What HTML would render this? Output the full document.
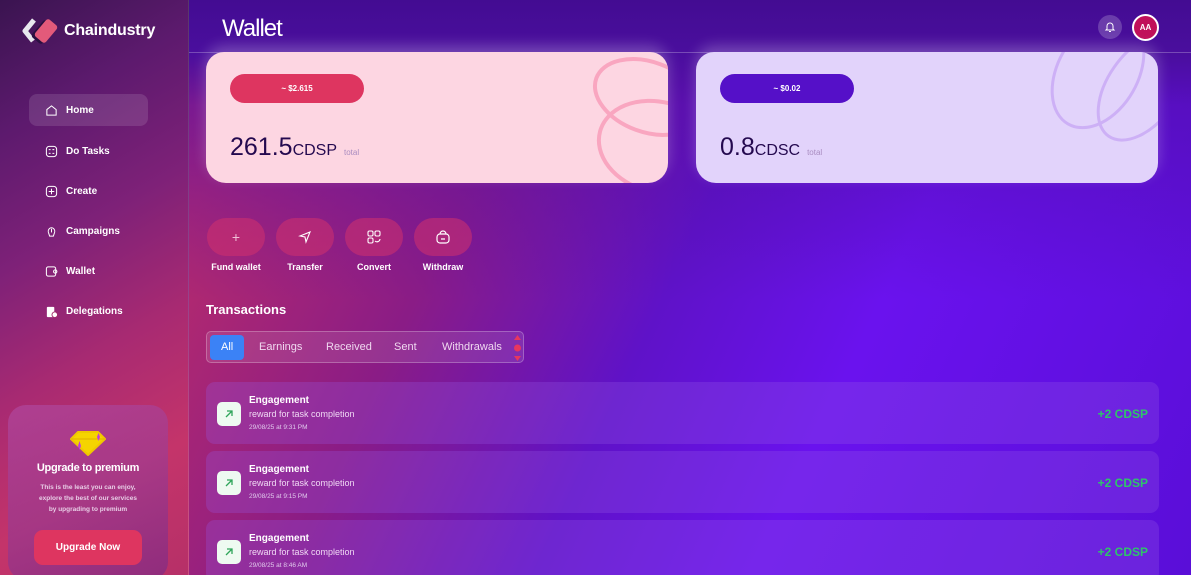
<!DOCTYPE html>
<html><head><meta charset="utf-8"><style>
*{box-sizing:border-box;margin:0;padding:0}
html,body{width:1191px;height:575px;overflow:hidden}
body{font-family:"Liberation Sans",sans-serif;position:relative;
background:linear-gradient(115deg,#c82f62 0%,#b42a6e 20%,#8a1c86 38%,#5f12c8 55%,#6a12ee 70%,#5a0ed8 100%)}
.topfade{position:absolute;left:189px;top:0;right:0;height:300px;background:linear-gradient(180deg,#430c92 0%,#4a0e9e 18%,rgba(80,14,170,0.6) 35%,rgba(80,14,170,0) 100%)}
.side{position:absolute;left:0;top:0;width:189px;height:575px;background:linear-gradient(150deg,#3a1450 0%,#5d1a6e 20%,#7e2178 40%,#a82a72 60%,#c4346a 80%,#b63068 100%);border-right:1px solid rgba(255,255,255,0.15)}
.logo{position:absolute;left:22px;top:17px;display:flex;align-items:center}
.logo span{color:#fff;font-weight:bold;font-size:16px;margin-left:4px;letter-spacing:-0.2px}
.nav{position:absolute;left:29px;width:119px;height:32px;display:flex;align-items:center;padding-left:16px;color:#fff;font-size:10px;font-weight:bold;border-radius:8px}
.nav svg{margin-right:8px}
.nav.act{background:rgba(255,255,255,0.12)}
.up{position:absolute;left:8px;top:405px;width:160px;height:175px;border-radius:18px;background:linear-gradient(160deg,rgba(180,80,170,0.55),rgba(110,40,140,0.55));text-align:center;color:#fff}
.up h4{font-size:11px;margin-top:57px;letter-spacing:-0.3px}
.up p{font-size:6.5px;line-height:11px;color:#e8cde6;font-weight:bold;margin-top:8px}
.up .btn{position:absolute;left:26px;top:125px;width:108px;height:35px;border-radius:9px;background:#de3560;font-size:10px;font-weight:bold;display:flex;align-items:center;justify-content:center}
.hline{position:absolute;left:189px;right:0;top:52px;height:1px;background:rgba(255,255,255,0.25)}
h1{position:absolute;left:222px;top:15px;color:#fff;font-size:24px;font-weight:normal;letter-spacing:-1px}
.card{position:absolute;top:52px;width:462px;height:131px;border-radius:18px 18px 20px 20px;overflow:hidden;box-shadow:0 -6px 14px rgba(255,255,255,0.25)}
.pill{position:absolute;left:24px;top:22px;width:134px;height:29px;border-radius:15px;color:#fff;font-size:8px;font-weight:bold;display:flex;align-items:center;justify-content:center}
.amt{position:absolute;left:24px;top:81px;color:#24094f;font-size:25px}
.amt b{font-weight:normal;font-size:16px}
.amt i{font-style:normal;font-size:8px;color:#a98cc0}
.ab{position:absolute;top:218px;width:58px;height:38px;border-radius:19px;background:rgba(210,50,110,0.55);display:flex;align-items:center;justify-content:center}
.al{position:absolute;top:262px;color:#fff;font-size:9px;font-weight:bold;text-align:center;width:80px}
.tabs{position:absolute;left:206px;top:331px;width:318px;height:32px;border-radius:5px;border:1px solid rgba(255,255,255,0.25);background:rgba(255,255,255,0.1);color:#f0d8f0;font-size:11px}
.tabs span{position:absolute;top:9px}
.row{position:absolute;left:206px;width:953px;height:62px;border-radius:9px;background:rgba(150,90,230,0.28);color:#fff}
.ic{position:absolute;left:11px;top:20px;width:24px;height:24px;border-radius:5px;background:#eefaf1;display:flex;align-items:center;justify-content:center}
.row .t{position:absolute;left:43px;top:13px;font-size:10px;font-weight:bold}
.row .s{position:absolute;left:43px;top:27px;font-size:9px;color:#f0d8f4}
.row .d{position:absolute;left:43px;top:42px;font-size:6.5px;color:#e0c8ec}
.row .v{position:absolute;right:11px;top:25px;font-size:12px;font-weight:bold;color:#2fc36a}
</style></head><body>
<div class="topfade"></div>
<div class="side">
 <div class="logo"><svg width="38" height="28" viewBox="0 0 38 28"><path d="M12 3 L3 14 L11 24" stroke="#e8e8ee" stroke-width="5" fill="none" stroke-linejoin="round"/><rect x="14" y="4" width="14" height="22" rx="3" transform="rotate(40 21 15)" fill="#2a1040"/><rect x="17" y="3" width="14" height="22" rx="3" transform="rotate(40 24 14)" fill="#e35a7a"/></svg><span>Chaindustry</span></div>
 <div class="nav act" style="top:94px"><svg width="13" height="13" viewBox="0 0 14 14" fill="none" stroke="#fff" stroke-width="1.1"><path d="M2 6 L7 2 L12 6 V12 H2Z"/></svg>Home</div>
 <div class="nav" style="top:135px"><svg width="13" height="13" viewBox="0 0 14 14" fill="none" stroke="#fff" stroke-width="1.1"><rect x="1.5" y="1.5" width="11" height="11" rx="3"/><path d="M4 5h2M8 5h2M4 9h2M8 9h2"/></svg>Do Tasks</div>
 <div class="nav" style="top:175px"><svg width="13" height="13" viewBox="0 0 14 14" fill="none" stroke="#fff" stroke-width="1.1"><rect x="1.5" y="1.5" width="11" height="11" rx="3"/><path d="M7 4v6M4 7h6"/></svg>Create</div>
 <div class="nav" style="top:215px"><svg width="13" height="13" viewBox="0 0 14 14" fill="none" stroke="#fff" stroke-width="1.1"><path d="M4 9 A3.5 4 0 1 1 10 9 L9 12 H5Z"/><path d="M7 4v4"/></svg>Campaigns</div>
 <div class="nav" style="top:255px"><svg width="13" height="13" viewBox="0 0 14 14" fill="none" stroke="#fff" stroke-width="1.1"><rect x="1.5" y="2" width="10" height="10" rx="2"/><circle cx="11" cy="7" r="1.8"/></svg>Wallet</div>
 <div class="nav" style="top:295px"><svg width="13" height="13" viewBox="0 0 14 14" fill="#fff"><rect x="2" y="2" width="8" height="11" rx="1"/><circle cx="10.5" cy="10.5" r="3" stroke="#a02a6a" stroke-width="1"/></svg>Delegations</div>
 <div class="up">
  <svg style="position:absolute;left:60px;top:24px" width="40" height="28" viewBox="0 0 40 28"><path d="M10 3 H30 L37 10 L20 26 L3 10Z" fill="#f5d400" stroke="#f0c800" stroke-width="2" stroke-linejoin="round"/><path d="M3 10 H37" stroke="#e0b000" stroke-width="1"/><path d="M10 17 l1.5 -5 l1.5 5 l-1.5 4z M6 17 h9" fill="#c03adf"/><path d="M29 8 l1.5 -4 l1.5 4 l-1.5 4z" fill="#c03adf"/></svg>
  <h4>Upgrade to premium</h4>
  <p>This is the least you can enjoy,<br>explore the best of our services<br>by upgrading to premium</p>
  <div class="btn">Upgrade Now</div>
 </div>
</div>
<div class="hline"></div>
<h1>Wallet</h1>
<div style="position:absolute;left:1098px;top:15px;width:24px;height:24px;border-radius:50%;background:rgba(255,255,255,0.2);display:flex;align-items:center;justify-content:center"><svg width="12" height="12" viewBox="0 0 12 12" fill="none" stroke="#fff" stroke-width="1"><path d="M3 8 V5 A3 3 0 0 1 9 5 V8 L10 9 H2Z M5 10.5 h2"/></svg></div>
<div style="position:absolute;left:1132px;top:14px;width:27px;height:27px;border-radius:50%;background:#c0105a;border:2px solid #fff;color:#fff;font-size:8px;font-weight:bold;display:flex;align-items:center;justify-content:center">AA</div>

<div class="card" style="left:206px;background:#fdd6e2">
 <svg style="position:absolute;right:0;top:0" width="110" height="131"><ellipse cx="90" cy="45" rx="55" ry="35" transform="rotate(20 90 45)" fill="none" stroke="#f9a6c0" stroke-width="4"/><ellipse cx="100" cy="95" rx="60" ry="45" transform="rotate(15 100 95)" fill="none" stroke="#f9a6c0" stroke-width="4"/></svg>
 <div class="pill" style="background:#de3560">~ $2.615</div>
 <div class="amt">261.5<b>CDSP</b> <i>total</i></div>
</div>
<div class="card" style="left:696px;background:#e2d3fb">
 <svg style="position:absolute;right:0;top:0" width="120" height="131"><ellipse cx="60" cy="20" rx="40" ry="60" transform="rotate(30 60 20)" fill="none" stroke="#cdb0f6" stroke-width="3"/><ellipse cx="105" cy="35" rx="35" ry="60" transform="rotate(35 105 35)" fill="none" stroke="#cdb0f6" stroke-width="3"/></svg>
 <div class="pill" style="background:#5510c8">~ $0.02</div>
 <div class="amt">0.8<b>CDSC</b> <i>total</i></div>
</div>

<div class="ab" style="left:207px"><span style="color:#f0c0d8;font-size:14px">+</span></div>
<div class="ab" style="left:276px"><svg width="14" height="14" viewBox="0 0 14 14" fill="none" stroke="#fff" stroke-width="1.1"><path d="M2 6 L12 2 L8 12 L7 7Z"/></svg></div>
<div class="ab" style="left:345px"><svg width="16" height="16" viewBox="0 0 16 16" fill="none" stroke="#fff" stroke-width="1.1"><rect x="2" y="2" width="5" height="5" rx="1.5"/><rect x="9" y="2" width="5" height="5" rx="1.5"/><rect x="2" y="9" width="5" height="5" rx="1.5"/><path d="M9 12 a3 3 0 0 0 5 -2"/></svg></div>
<div class="ab" style="left:414px"><svg width="16" height="16" viewBox="0 0 16 16" fill="none" stroke="#fff" stroke-width="1.2"><rect x="2" y="5" width="12" height="9" rx="3"/><path d="M5 5 a3 3 0 0 1 6 0 M6 10h4"/></svg></div>
<div class="al" style="left:196px">Fund wallet</div>
<div class="al" style="left:265px">Transfer</div>
<div class="al" style="left:334px">Convert</div>
<div class="al" style="left:403px">Withdraw</div>

<div style="position:absolute;left:206px;top:302px;color:#fff;font-size:13px;font-weight:bold">Transactions</div>
<div class="tabs">
 <div style="position:absolute;left:3px;top:3px;width:34px;height:25px;border-radius:4px;background:#3b82f6"></div>
 <span style="left:14px;color:#fff">All</span>
 <span style="left:52px">Earnings</span>
 <span style="left:119px">Received</span>
 <span style="left:187px">Sent</span>
 <span style="left:235px">Withdrawals</span>
 <svg style="position:absolute;left:306px;top:2px" width="9" height="28"><path d="M1 6 L4.5 1 L8 6Z" fill="#e8365e"/><circle cx="4.5" cy="14" r="3.5" fill="#e8365e"/><path d="M1 22 L4.5 27 L8 22Z" fill="#e8365e"/></svg>
</div>

<div class="row" style="top:382px"><div class="ic"><svg width="10" height="10" viewBox="0 0 10 10" fill="none" stroke="#2fa55a" stroke-width="1.3"><path d="M2 8 L8 2 M3 2 H8 V7"/></svg></div><div class="t">Engagement</div><div class="s">reward for task completion</div><div class="d">29/08/25 at 9:31 PM</div><div class="v">+2 CDSP</div></div>
<div class="row" style="top:451px"><div class="ic"><svg width="10" height="10" viewBox="0 0 10 10" fill="none" stroke="#2fa55a" stroke-width="1.3"><path d="M2 8 L8 2 M3 2 H8 V7"/></svg></div><div class="t">Engagement</div><div class="s">reward for task completion</div><div class="d">29/08/25 at 9:15 PM</div><div class="v">+2 CDSP</div></div>
<div class="row" style="top:520px"><div class="ic"><svg width="10" height="10" viewBox="0 0 10 10" fill="none" stroke="#2fa55a" stroke-width="1.3"><path d="M2 8 L8 2 M3 2 H8 V7"/></svg></div><div class="t">Engagement</div><div class="s">reward for task completion</div><div class="d">29/08/25 at 8:46 AM</div><div class="v">+2 CDSP</div></div>
</body></html>
